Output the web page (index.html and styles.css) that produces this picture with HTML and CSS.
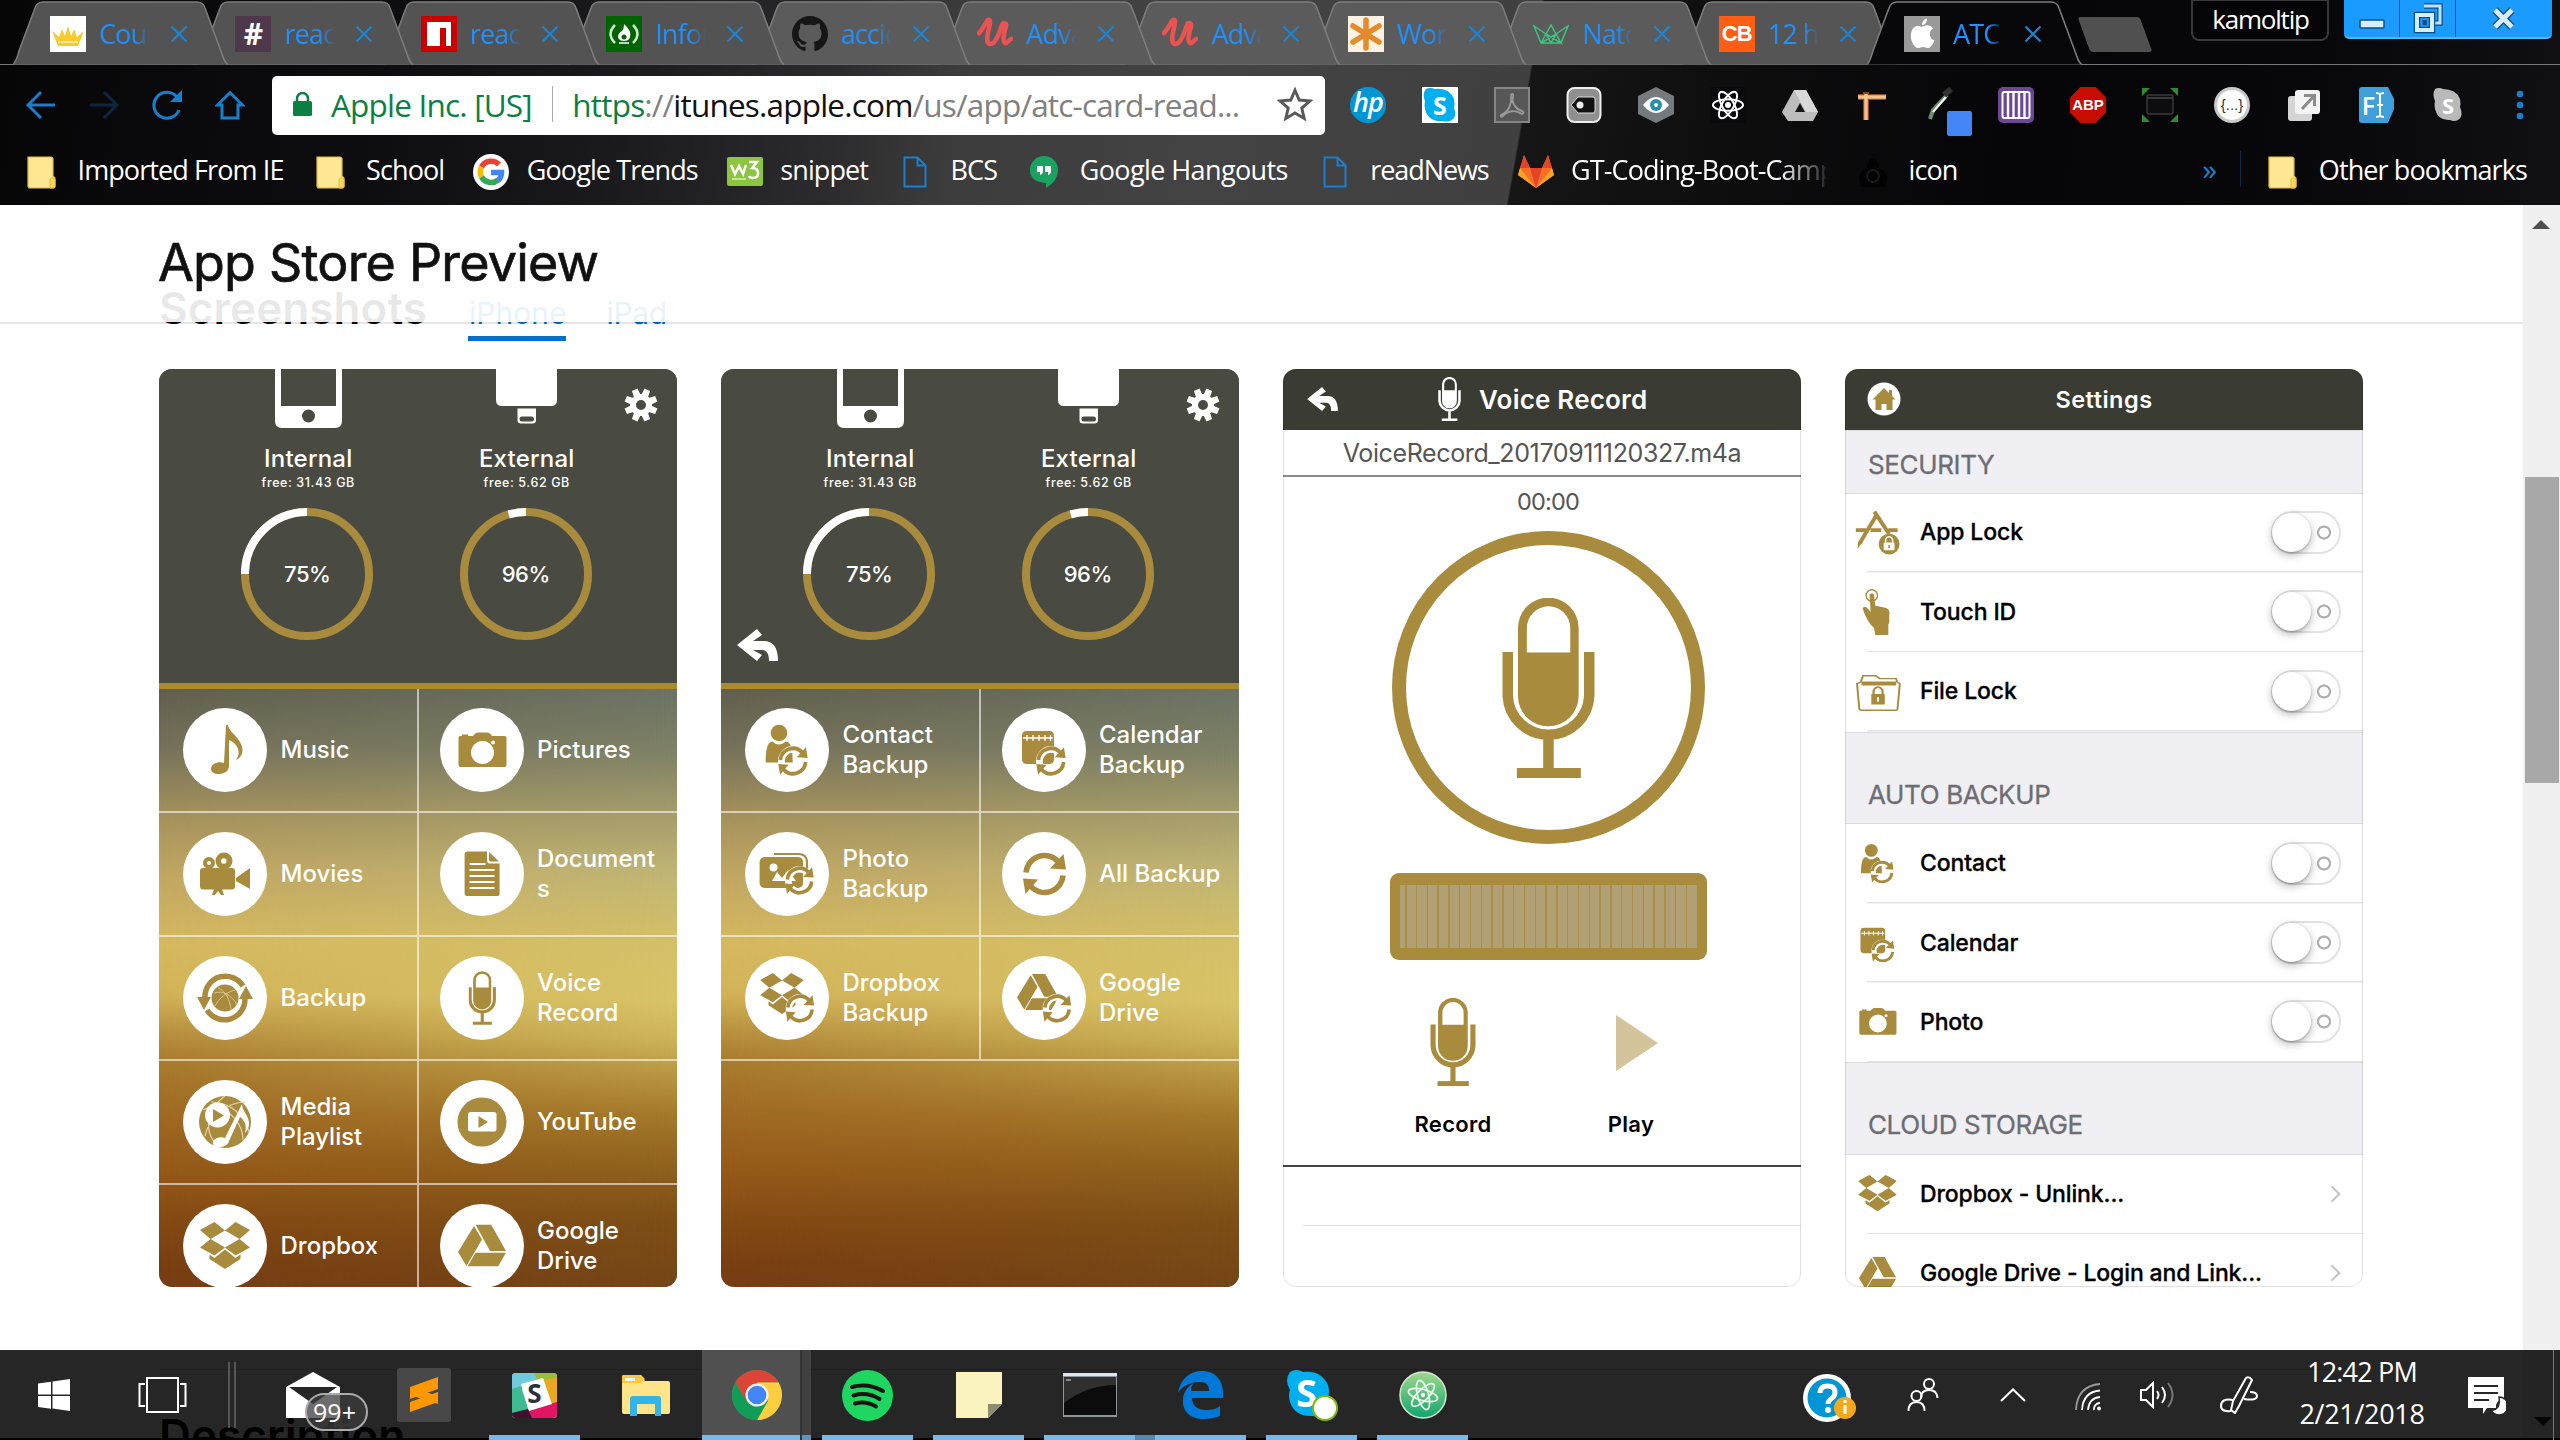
FILE: index.html
```
<!DOCTYPE html>
<html lang="en">
<head>
<meta charset="utf-8">
<title>ATC Card Reader</title>
<link rel="stylesheet" href="styles.css">
</head>
<body>
<svg class="defs" aria-hidden="true">
  <symbol id="tab-shape" viewBox="0 0 215 65"><path class="tab-fill" d="M0 64.5C3 62 4 58 6 51L22 8Q24 2 30 2H184Q190 2 192 8L209 54C211 60 212 63 215 64.5"/></symbol>
  <symbol id="x" viewBox="0 0 18 18"><path d="M1.5 1.500l15 15M16.500 1.500l-15 15" stroke="#1f83cf" stroke-width="2.200" fill="none"/></symbol>
  <symbol id="folder" viewBox="0 0 36 36"><path d="M4 3h23q2 0 2 2v17l2 2v8q0 2-2 2H6q-2 0-2-2z" fill="#ffe793" stroke="#e3b93c" stroke-width="1.200"/><path d="M26 34v-8q0-2 2-2h1q2 0 2 2v6q0 2-2 2z" fill="#ffd95a" stroke="#e3b93c"/></symbol>
  <symbol id="doc" viewBox="0 0 36 36"><path d="M7.500 3.500h13l8 8v21h-21zM20.500 3.500v8h8" fill="none" stroke="#1b7fd0" stroke-width="2"/></symbol>
  <symbol id="udemy" viewBox="0 0 36 36"><path d="M2 17C6 13 9 6 11 4c3-1 2 3 1 8-2 8-3 15 1 16 5 1 9-10 12-19 1-3 5-2 4 1-2 7-4 16-1 17 2 1 4-3 6-4" fill="none" stroke="#eb5252" stroke-width="4.600" stroke-linecap="round"/></symbol>
  <symbol id="drive-grey" viewBox="0 0 36 36"><path d="M12 3h12L36 25l-5 9H6L0 25z" fill="#bdbdbd"/><path d="M12 3h12l12 22H24z" fill="#d8d8d8"/><path d="M18 16l5 9H13z" fill="#151515"/></symbol>

  <symbol id="mic" viewBox="0 0 92.500 180"><path fill="currentColor" fill-rule="evenodd" d="M15.700 30a30.300 30.300 0 0 1 60.700 0v68a30.300 30.300 0 0 1-60.700 0zM24.600 54.600H68V30a21.700 21.700 0 0 0-43.400 0z"/><path fill="none" stroke="currentColor" stroke-width="10.500" d="M5.500 54v44a40.800 40.800 0 0 0 81.500 0V54M46.200 140v32"/><path fill="currentColor" d="M14.600 170h64v10h-64z"/></symbol>
  <symbol id="reply" viewBox="0 0 41 32"><path fill="currentColor" d="M0 16L20 0l5 6-9 6h11c9 0 14 6 14 20h-9c0-7-2-11-7-11h-9l9 5-5 6z"/></symbol>
  <symbol id="gear" viewBox="-17 -17 34 34"><g fill="currentColor"><path fill-rule="evenodd" d="M-11 0a11 11 0 1 0 22 0a11 11 0 1 0-22 0M-5 0a5 5 0 1 0 10 0a5 5 0 1 0-10 0"/><path d="M-3.500-9L-3-16.500H3L3.500-9zM-3.500 9L-3 16.500H3L3.500 9zM-9-3.500L-16.500-3V3L-9 3.500zM9-3.500L16.500-3V3L9 3.500z" transform="rotate(22.500)"/><path d="M-3.500-9L-3-16.500H3L3.500-9zM-3.500 9L-3 16.500H3L3.500 9zM-9-3.500L-16.500-3V3L-9 3.500zM9-3.500L16.500-3V3L9 3.500z" transform="rotate(67.500)"/></g></symbol>
  <symbol id="phone" viewBox="0 0 67 59"><path fill="#fff" fill-rule="evenodd" d="M0 0h67v52q0 7-7 7H7q-7 0-7-7zM6 0v37h55V0zM27 47a6.500 6.500 0 1 0 13 0a6.500 6.500 0 1 0-13 0"/></symbol>
  <symbol id="stick" viewBox="0 0 67 59"><path fill="#fff" fill-rule="evenodd" d="M3 0h61v31q0 6-6 6H9q-6 0-6-6zM24.500 39.500h18.500V51q0 3.500-3.500 3.500H28q-3.500 0-3.500-3.500zM29 47.500a2.500 2.500 0 0 0 0 5h9.500a2.500 2.500 0 0 0 0-5z"/></symbol>
  <symbol id="sync" viewBox="0 0 44 44"><path fill="none" stroke="currentColor" stroke-width="5.500" d="M3.500 20.500A18.500 18.500 0 0 1 36 10M40.500 23.500A18.500 18.500 0 0 1 8 34"/><path fill="currentColor" d="M41 2l2.500 15.500-16-1zM3 42L.5 26.500l15 1z"/></symbol>
  <symbol id="sync-badge" viewBox="0 0 44 44"><circle cx="22" cy="22" r="17" fill="none" stroke="#fff" stroke-width="10"/><use href="#sync"/></symbol>
  <symbol id="dropbox-shape" viewBox="0 0 50 47"><path fill="currentColor" d="M0 8L14.500 0 25 8.500 10.500 17zM50 8L35.500 0 25 8.500 39.500 17zM0 25.500L10.500 17 25 25.500 14.500 33.500zM50 25.500L39.500 17 25 25.500 35.500 33.500zM9.500 32.500L14.500 36 25 27.500 35.500 36l5-3.500v4.500L25 47 9.500 37z"/></symbol>
  <symbol id="drive-shape" viewBox="0 0 48 42"><path fill="currentColor" d="M17.500 0H33l15 26.500H32zM16 1.500L24 15 8.500 41.500 0 27.500zM17.500 28.200H48L40 42H9.500z"/></symbol>

  <symbol id="music" viewBox="0 0 84 84"><path fill="currentColor" d="M43 17h2c1 8 14 13 14.500 25 0 4-2 8-6.500 10 6-8 1-17-7-20v26c0 5-5 8-10 8s-8-2-8-5c0-5 7-8 13-6z"/></symbol>
  <symbol id="camera" viewBox="0 0 84 84"><path fill="currentColor" fill-rule="evenodd" d="M20 28h2v-1.500h6V28h5q2-3.500 5-3.500h9q3 0 5 3.500h12.500q2 0 2 2v27q0 2-2 2H20.500q-2 0-2-2V30q0-2 1.500-2zM31 44.600a11.500 11.500 0 1 0 23 0a11.500 11.500 0 1 0-23 0M51 34.500a2 2 0 1 0 4 0a2 2 0 1 0-4 0"/></symbol>
  <symbol id="movie" viewBox="0 0 84 84"><g fill="currentColor"><path fill-rule="evenodd" d="M20 31a6 6 0 1 0 12 0a6 6 0 1 0-12 0M24 31a2 2 0 1 0 4 0a2 2 0 1 0-4 0M32.500 29a8.500 8.500 0 1 0 17 0a8.500 8.500 0 1 0-17 0M38 29a2.800 2.800 0 1 0 5.600 0a2.800 2.800 0 1 0-5.600 0"/><rect x="17" y="36" width="35" height="21.500" rx="3"/><path d="M53 46l14-10v21L53 49zM31 57h8l2 6h-3l-3-4-3 4h-3z"/></g></symbol>
  <symbol id="file" viewBox="0 0 84 84"><path fill="currentColor" d="M27 19.500h20v9q0 3 3 3h9.600V62q0 2-2 2H27q-2.400 0-2.400-2V22q0-2.500 2.400-2.500zM49 20l10 9.500h-8q-2 0-2-2z"/><path stroke="#fff" stroke-width="1.800" d="M29.500 32h16M29.500 38h25M29.500 44h25M29.500 50h25M29.500 56h25"/></symbol>
  <symbol id="backup" viewBox="0 0 84 84"><circle cx="42" cy="42" r="13.500" fill="currentColor"/><path d="M31 37c8-3 18 2 23 12M35 32c8 3 12 12 13 22M52 34c-8 2-16 8-20 16" stroke="#d9c48f" fill="none"/><path fill="none" stroke="currentColor" stroke-width="5.500" d="M22 41A20.500 20.500 0 0 1 60 30M62 43A20.500 20.500 0 0 1 24 54"/><path fill="currentColor" d="M14 41h14l-7 13zM70 43H56l7-13z"/></symbol>
  <symbol id="voice" viewBox="0 0 84 84"><use href="#mic" x="28.500" y="15" width="27.500" height="54"/></symbol>
  <symbol id="playlist" viewBox="0 0 84 84"><circle cx="42" cy="42" r="26" fill="currentColor"/><path d="M20 30c16-10 40 8 40 30M22 56c4-18 22-34 40-34M42 16c-20 14-22 40-4 52M28 22c20 0 34 14 38 30" stroke="#e2d3a8" fill="none" stroke-width="1.200"/><circle cx="34.500" cy="35" r="12.500" fill="#fff"/><path d="M30 29v13l11-6.500z" fill="currentColor"/><path d="M59 24c0 7 7 12 7 19 0 5-2 8-4 10 2-7 0-13-5-16L46 61c-1 4-5 6-10 6-4 0-7-2-6-5 1-4 8-6 12-4z" fill="#fff"/></symbol>
  <symbol id="youtube" viewBox="0 0 84 84"><circle cx="42" cy="42" r="24.500" fill="currentColor"/><rect x="28" y="32" width="28.500" height="19.500" rx="2.500" fill="#fff"/><path d="M38.500 36v12l9.500-6z" fill="currentColor"/></symbol>
  <symbol id="dropbox" viewBox="0 0 84 84"><use href="#dropbox-shape" x="17" y="18" width="50" height="47"/></symbol>
  <symbol id="gdrive" viewBox="0 0 84 84"><use href="#drive-shape" x="18" y="20.500" width="48" height="42"/></symbol>
  <symbol id="contact" viewBox="0 0 84 84"><circle cx="34" cy="25" r="8.300" fill="currentColor"/><path fill="currentColor" d="M20.700 54.500c0-11 1-21 7-21 3 4 9 4 13 0 6 0 7 10 7 21z"/><use href="#sync-badge" x="33" y="38" width="30" height="30"/></symbol>
  <symbol id="calendar" viewBox="0 0 84 84"><rect x="20" y="23" width="32" height="33" rx="4.500" fill="currentColor"/><path d="M21 30h30M25 27v6M31 27v6M37 27v6M43 27v6M48.500 27v6" stroke="#fff" stroke-width="1.300"/><use href="#sync-badge" x="34" y="38" width="30" height="30"/></symbol>
  <symbol id="photo" viewBox="0 0 84 84"><path d="M29 22h24q9 0 9 8v8" fill="none" stroke="currentColor" stroke-width="2.200"/><rect x="14.600" y="25" width="43.500" height="31" rx="5" fill="currentColor"/><circle cx="28.500" cy="35.500" r="4" fill="#fff"/><path d="M27 49l5-9 5 6 6-8 8 11z" fill="#fff"/><use href="#sync-badge" x="40" y="34" width="29" height="29"/></symbol>
  <symbol id="allsync" viewBox="0 0 84 84"><use href="#sync" x="20.500" y="20" width="44" height="44"/></symbol>
  <symbol id="dropbox-sync" viewBox="0 0 84 84"><use href="#dropbox-shape" x="15" y="17" width="44" height="41"/><use href="#sync-badge" x="40.500" y="38" width="29" height="29"/></symbol>
  <symbol id="gdrive-sync" viewBox="0 0 84 84"><use href="#drive-shape" x="15" y="18" width="41" height="36"/><use href="#sync-badge" x="40.500" y="38" width="29" height="29"/></symbol>
  <symbol id="applock" viewBox="0 0 84 84"><g fill="none" stroke="currentColor" stroke-width="5"><path d="M14 39h13M33 39h14M56 39h12M19 56L41 19M38 15l19 29"/></g><path fill="currentColor" d="M16 63l1-9 5 2z"/><circle cx="57" cy="57" r="13.500" fill="currentColor"/><rect x="50" y="55" width="14" height="10" rx="1.500" fill="#fff"/><path d="M52.500 55v-3a4.500 4.500 0 0 1 9 0v3" fill="none" stroke="#fff" stroke-width="2"/><path d="M57 58v4" stroke="currentColor" stroke-width="2"/></symbol>
  <symbol id="touch" viewBox="-11 -14 114 114"><circle cx="36" cy="15" r="10" fill="none" stroke="currentColor" stroke-width="2.500"/><path fill="currentColor" d="M32 14q4-6 8 0l2 19 16 3q9 2 9 9-1 10 0 16l-2 5v18H42L40 72Q28 62 20 38q2-6 8-1l6 7z"/></symbol>
  <symbol id="filelock" viewBox="0 0 84 84"><g transform="translate(1 11.500) scale(.97 .73)"><path fill="none" stroke="currentColor" stroke-width="2.600" d="M18 72L15 28l5-3 3-11h17l5 5h22l2 7 3 2-3 44q0 3-3 3H21q-3 0-3-3z"/><path fill="currentColor" d="M21 24h46v7H21zM34 46h18v19H34z"/><path d="M37 46v-4a6 8 0 0 1 12 0v4" fill="none" stroke="currentColor" stroke-width="3"/><path d="M43 52v8" stroke="#fff" stroke-width="2.500"/></g></symbol>
</svg>

<header class="browser">
  <div class="tabstrip">
    <div class="tab"><svg class="shape"><use href="#tab-shape"/></svg><span class="fav bg-white"><svg viewBox="0 0 36 36"><path d="M2 15l7 6 3-8 3 7 3-10 3 10 3-7 3 8 7-6-6 15H8z" fill="#f5cc2c"/><path d="M8 26h20" stroke="#fff"/></svg></span><span class="title">Cour</span><svg class="close"><use href="#x"/></svg></div>
    <div class="tab"><svg class="shape"><use href="#tab-shape"/></svg><span class="fav bg-slack">#</span><span class="title">reac</span><svg class="close"><use href="#x"/></svg></div>
    <div class="tab"><svg class="shape"><use href="#tab-shape"/></svg><span class="fav bg-npm"><svg viewBox="0 0 36 36"><path d="M6 6h24v24h-5V12h-6v18H6z" fill="#fff"/></svg></span><span class="title">reac</span><svg class="close"><use href="#x"/></svg></div>
    <div class="tab"><svg class="shape"><use href="#tab-shape"/></svg><span class="fav bg-fcc"><svg viewBox="0 0 36 36"><path d="M9 9q-9 9 0 18M27 9q9 9 0 18" fill="none" stroke="#cfe8cf" stroke-width="2.500"/><path d="M18 8q8 7 6 13-1 4-6 4t-6-4q0-4 4-6 2-2 2-7z" fill="#fff"/><path d="M13 27h10" stroke="#fff" stroke-width="1.500"/><circle cx="18" cy="21" r="2.500" fill="#006400"/></svg></span><span class="title">Infor</span><svg class="close"><use href="#x"/></svg></div>
    <div class="tab"><svg class="shape"><use href="#tab-shape"/></svg><span class="fav"><svg viewBox="0 0 16 16"><path fill="#161616" d="M8 0C3.580 0 0 3.580 0 8c0 3.540 2.290 6.530 5.470 7.590.4.070.55-.17.55-.38 0-.19-.01-.82-.01-1.490-2.010.37-2.530-.49-2.690-.94-.09-.23-.48-.94-.82-1.130-.28-.15-.68-.52-.01-.53.63-.01 1.080.58 1.230.82.720 1.210 1.870.87 2.330.66.070-.52.280-.87.510-1.070-1.780-.2-3.640-.89-3.640-3.950 0-.87.310-1.590.82-2.150-.08-.2-.36-1.020.08-2.120 0 0 .67-.21 2.200.82.640-.18 1.320-.27 2-.27s1.360.09 2 .27c1.530-1.040 2.200-.82 2.200-.82.440 1.100.160 1.920.080 2.120.510.560.820 1.270.820 2.150 0 3.070-1.870 3.750-3.650 3.950.290.250.540.730.540 1.480 0 1.070-.01 1.930-.01 2.200 0 .210.150.460.550.380A8.010 8.010 0 0 0 16 8c0-4.420-3.580-8-8-8z"/></svg></span><span class="title">accid</span><svg class="close"><use href="#x"/></svg></div>
    <div class="tab"><svg class="shape"><use href="#tab-shape"/></svg><span class="fav"><svg><use href="#udemy"/></svg></span><span class="title">Adva</span><svg class="close"><use href="#x"/></svg></div>
    <div class="tab"><svg class="shape"><use href="#tab-shape"/></svg><span class="fav"><svg><use href="#udemy"/></svg></span><span class="title">Adva</span><svg class="close"><use href="#x"/></svg></div>
    <div class="tab"><svg class="shape"><use href="#tab-shape"/></svg><span class="fav bg-cream"><svg viewBox="0 0 36 36"><path d="M18 4v28M5 10l26 16M31 10L5 26" stroke="#e48a2a" stroke-width="5.500" stroke-linecap="round"/></svg></span><span class="title">Wor</span><svg class="close"><use href="#x"/></svg></div>
    <div class="tab"><svg class="shape"><use href="#tab-shape"/></svg><span class="fav"><svg viewBox="0 0 36 36"><path d="M8 27L1 10l12 8 5-9 5 9 12-8-7 17zM8 27l5-9 15 9 -5-9L8 27M13 18l5 9 5-9" fill="none" stroke="#3fc380" stroke-width="1.500"/></svg></span><span class="title">Nato</span><svg class="close"><use href="#x"/></svg></div>
    <div class="tab"><svg class="shape"><use href="#tab-shape"/></svg><span class="fav bg-cb">CB</span><span class="title">12 h</span><svg class="close"><use href="#x"/></svg></div>
    <div class="tab active"><svg class="shape"><use href="#tab-shape"/></svg><span class="fav bg-grey"><svg viewBox="0 0 36 36"><path d="M18 11c2-1 4-2 6-1.500 2 0 4 1 5 3-5 3-4 10 1.500 12-1 3-3 6-5.500 7.500-2 .5-4-1-6-1s-4 1.500-6 1C8 29 5 21 8 14c2-4 6-5 10-3zM18 9c0-3 2-6 5-6.500 0 4-2 6.500-5 6.500z" fill="#fff"/></svg></span><span class="title">ATC</span><svg class="close"><use href="#x"/></svg></div>
    <span class="newtab"></span>
    <span class="profile">kamoltip</span>
    <div class="winbtns">
      <span><svg width="28" height="34" viewBox="0 0 28 34"><rect x="2" y="19" width="24" height="8" rx="1" fill="#d6ecff" stroke="#0a4f8c" stroke-width="1.500"/></svg></span>
      <span><svg width="30" height="34" viewBox="0 0 30 34"><path d="M11 5h16v17h-5" fill="none" stroke="#0a4f8c" stroke-width="5.500"/><path d="M11 5h16v17h-5" fill="none" stroke="#bfe2ff" stroke-width="3"/><rect x="4" y="14" width="15" height="15" fill="none" stroke="#0a4f8c" stroke-width="6.500"/><rect x="4" y="14" width="15" height="15" fill="none" stroke="#d6ecff" stroke-width="4"/><rect x="9.500" y="19" width="4.500" height="5" fill="#0a4f8c"/></svg></span>
      <span class="wide"><svg width="28" height="34" viewBox="0 0 28 34"><path d="M5 9l17 17M22 9L5 26" stroke="#0a4f8c" stroke-width="7.500"/><path d="M5 9l17 17M22 9L5 26" stroke="#d6ecff" stroke-width="5"/></svg></span>
    </div>
  </div>

  <div class="toolbar">
    <div class="nav">
      <svg viewBox="0 0 30 30"><path d="M29 15H3M15 2L2 15l13 13" fill="none" stroke="#1680cc" stroke-width="3"/></svg>
      <svg viewBox="0 0 30 30"><path d="M1 15h26M15 2l13 13-13 13" fill="none" stroke="#0d2740" stroke-width="3"/></svg>
      <svg viewBox="0 0 30 30"><path d="M27 20A13 13 0 1 1 25 7" fill="none" stroke="#1680cc" stroke-width="3"/><path d="M30 0v12H18z" fill="#1680cc"/></svg>
      <svg viewBox="0 0 30 30"><path d="M15 2.500L2.500 15H7v13h16V15h4.500z" fill="none" stroke="#1680cc" stroke-width="3"/></svg>
    </div>
    <div class="omnibox">
      <svg class="lock" viewBox="0 0 19 25"><rect y="9" width="19" height="15" rx="1.500" fill="#0b8043"/><path d="M4 10V6.500a5.500 5.500 0 0 1 11 0V10" fill="none" stroke="#0b8043" stroke-width="2.500"/></svg>
      <span class="ev">Apple Inc. [US]</span>
      <span class="sep"></span>
      <span class="url"><span class="ok">https</span>://<b>itunes.apple.com</b>/us/app/atc-card-read...</span>
      <svg class="star" viewBox="0 0 34 34"><path d="M17 4l4 9.300 10 .9-7.600 6.600 2.300 9.800L17 25.400l-8.700 5.200 2.300-9.800L3 14.200l10-.9z" fill="none" stroke="#5a5a5a" stroke-width="2.800"/></svg>
    </div>
    <div class="exts">
      <span class="ext hp">hp</span>
      <span class="ext bg-white"><svg viewBox="0 0 36 36"><path d="M4 2q4-2 9 0 14-2 19 10 1 5 0 9 4 9-4 13-4 1-8 0Q6 35 3 22q-1-4 0-8-3-7 1-12z" fill="#00aff0"/></svg><i>S</i></span>
      <span class="ext"><svg viewBox="0 0 36 36"><rect x="1" y="1" width="34" height="34" fill="#575757" stroke="#868686" stroke-width="2"/><path d="M7 28c8-3 11-12 10-19 0-3 3-3 2 1-2 6 4 13 9 14 3 1 1 4-2 2-6-4-14-1-17 3-1 1-3 1-2-1z" fill="none" stroke="#999" stroke-width="1.800"/></svg></span>
      <span class="ext"><svg viewBox="0 0 36 36"><rect x="1.500" y="1" width="33" height="34" rx="7" fill="#8f8f8f" stroke="#eee" stroke-width="2"/><path d="M5 18l7-8h15q2 0 2 2v12q0 2-2 2H12z" fill="#111" stroke="#ddd"/><circle cx="14" cy="18" r="3.500" fill="#eee"/></svg></span>
      <span class="ext"><svg viewBox="0 0 36 36"><path d="M18 0l18 9v18l-18 9L0 27V9z" fill="#767a7c"/><path d="M5 18q13-16 26 0-13 16-26 0z" fill="#fff"/><circle cx="18" cy="18" r="6" fill="#2a8cb5"/><circle cx="18" cy="18" r="2" fill="#fff"/></svg></span>
      <span class="ext"><svg viewBox="-18 -18 36 36"><rect x="-18" y="-18" width="36" height="36" fill="#0a0a0c"/><g fill="none" stroke="#fff" stroke-width="2"><ellipse rx="15" ry="5.800"/><ellipse rx="15" ry="5.800" transform="rotate(60)"/><ellipse rx="15" ry="5.800" transform="rotate(120)"/></g><circle r="3" fill="#fff"/></svg></span>
      <span class="ext"><svg><use href="#drive-grey"/></svg></span>
      <span class="ext"><svg viewBox="0 0 36 36"><path d="M4 10h28M12 5v28" stroke="#8a4a1c" stroke-width="6"/><path d="M4 10h28M12 7v26" stroke="#f5c48c" stroke-width="3.500"/></svg></span>
      <span class="ext"><svg viewBox="0 0 36 36"><path d="M4 32l3-9L21 8" stroke="#6b8f72" stroke-width="4" fill="none"/><path d="M7 25L20 10" stroke="#fff" stroke-width="2"/><path d="M18 8L25 2" stroke="#333" stroke-width="6"/></svg><b class="swatch"></b></span>
      <span class="ext"><svg viewBox="0 0 36 36"><rect width="36" height="36" rx="5" fill="#6b4796"/><rect x="4.500" y="5" width="27" height="26" rx="2" fill="#6b4796" stroke="#fff" stroke-width="2"/><path d="M10 5v26M15.500 5v26M21 5v26M26.500 5v26" stroke="#fff" stroke-width="2.400"/></svg></span>
      <span class="ext abp">ABP</span>
      <span class="ext"><svg viewBox="0 0 36 36"><path d="M0 1h8L0 9zM36 1h-8l8 8zM0 35h8l-8-8zM36 35h-8l8-8z" fill="#2f8a2f"/><rect x="5" y="8" width="26" height="19" rx="2" fill="#0d0d0f" stroke="#3a3a3a" stroke-width="1.500"/><path d="M5 11h26" stroke="#3a3a3a" stroke-width="2"/></svg></span>
      <span class="ext json">{...}</span>
      <span class="ext"><svg viewBox="0 0 36 36"><rect x="2" y="9" width="24" height="25" rx="3" fill="#d5d5d5"/><rect x="9" y="3" width="25" height="24" rx="3" fill="#f4f4f4"/><path d="M16 22L28 9M18 8.500h10.500V19" fill="none" stroke="#8b8b8b" stroke-width="3"/></svg></span>
      <span class="ext"><svg viewBox="0 0 36 36"><path d="M4 0h26l6 12v10l-6 14H4q-3 0-3-3V3q0-3 3-3z" fill="#3f9fdb"/><path d="M18 6q3 0 4 1.500Q23 6 26 6M18 30q3 0 4-1.500Q23 30 26 30M22 7v22M19 18h6" fill="none" stroke="#fff" stroke-width="2"/></svg><i class="left">F</i></span>
      <span class="ext"><svg viewBox="0 0 36 36"><path d="M5 2q4-2 8 0 13 0 17 10 1 5 0 8 4 9-2 13-4 2-8 0Q8 34 5 22q-1-4 0-8-3-7 0-12z" fill="#b9b9b9"/></svg><i class="grey">S</i></span>
      <span class="ext"><svg viewBox="0 0 36 36"><g fill="#1680cc"><circle cx="18" cy="7" r="3.300"/><circle cx="18" cy="18" r="3.300"/><circle cx="18" cy="29" r="3.300"/></g></svg></span>
    </div>
  </div>

  <div class="bookmarks">
    <span class="bm"><svg><use href="#folder"/></svg>Imported From IE</span>
    <span class="bm"><svg><use href="#folder"/></svg>School</span>
    <span class="bm"><svg viewBox="0 0 36 36"><circle cx="18" cy="18" r="18" fill="#fff"/><g fill="none" stroke-width="5.500"><path d="M8.500 13A11 11 0 0 1 26 10.500" stroke="#ea4335"/><path d="M8.500 23a11 11 0 0 1 0-10" stroke="#fbbc05"/><path d="M8.500 23A11 11 0 0 0 25 26" stroke="#34a853"/><path d="M18 18.500h10.500q0 5-3.500 8" stroke="#4285f4"/></g></svg>Google Trends</span>
    <span class="bm"><svg viewBox="0 0 36 36"><rect y="3" width="36" height="29" rx="2" fill="#8cc53f"/><path d="M4 11l4 9 4-8 4 8 3-9M22 8h8l-5 6q6 0 6 5t-5 5q-3 0-4-2" fill="none" stroke="#fff" stroke-width="2.500"/><path d="M5 25h14" stroke="#d8efb8" stroke-width="1.500"/></svg>snippet</span>
    <span class="bm"><svg><use href="#doc"/></svg>BCS</span>
    <span class="bm wide"><svg viewBox="0 0 36 36"><path d="M18 2a14 14 0 0 1 14 14q0 11-12 18v-5Q4 28 4 16A14 14 0 0 1 18 2z" fill="#1ba261"/><path d="M11 12h6v5q0 3-3 4v-3h-3zM19 12h6v5q0 3-3 4v-3h-3z" fill="#fff"/></svg>Google Hangouts</span>
    <span class="bm tight"><svg><use href="#doc"/></svg>readNews</span>
    <span class="bm"><svg viewBox="0 0 36 36"><path d="M18 34L0 21 6 1l6 13h12L30 1l6 20z" fill="#fc6d26"/><path d="M6 1l6 13H2zM30 1l-6 13h10zM18 34l-6-20h12z" fill="#e24329"/><path d="M2 14l-2 7 18 13zM34 14l2 7-18 13z" fill="#fca326"/></svg><span class="fade">GT-Coding-Boot-Camp</span></span>
    <span class="bm"><svg viewBox="0 0 36 36"><path d="M18 4q6 2 6 10 8 4 8 11l-2 8H6l-2-8q0-7 8-11 0-8 6-10z" fill="#020202"/><circle cx="18" cy="22" r="6" fill="none" stroke="#1a1a1a" stroke-width="2"/></svg>icon</span>
    <span class="more">»</span>
    <span class="bm other"><svg><use href="#folder"/></svg>Other bookmarks</span>
  </div>
</header>

<main class="page">
  <div class="storebar"><h1>App Store Preview</h1></div>

  <section class="shelf">
    <div class="shelf-head">
      <h2>Screenshots</h2>
      <a class="device on">iPhone</a>
      <a class="device">iPad</a>
    </div>
    <div class="shots">

      <article class="shot gold">
        <div class="storage">
          <svg class="gear"><use href="#gear"/></svg>
          <div class="disk"><svg class="dev"><use href="#phone"/></svg><b>Internal</b><small>free: 31.43 GB</small>
            <div class="ring"><svg viewBox="0 0 132 132"><circle cx="66" cy="66" r="62" pathLength="100"/><circle class="free" cx="66" cy="66" r="62" pathLength="100" stroke-dasharray="25 75" transform="rotate(180 66 66)"/></svg><span>75%</span></div></div>
          <div class="disk"><svg class="dev"><use href="#stick"/></svg><b>External</b><small>free: 5.62 GB</small>
            <div class="ring"><svg viewBox="0 0 132 132"><circle cx="66" cy="66" r="62" pathLength="100"/><circle class="free" cx="66" cy="66" r="62" pathLength="100" stroke-dasharray="4.500 95.500" transform="rotate(253.800 66 66)"/></svg><span>96%</span></div></div>
        </div>
        <div class="tiles">
          <div class="tile"><svg><use href="#music"/></svg><span>Music</span></div><div class="tile"><svg><use href="#camera"/></svg><span>Pictures</span></div>
          <div class="tile"><svg><use href="#movie"/></svg><span>Movies</span></div><div class="tile"><svg><use href="#file"/></svg><span>Documents</span></div>
          <div class="tile"><svg><use href="#backup"/></svg><span>Backup</span></div><div class="tile"><svg><use href="#voice"/></svg><span>Voice Record</span></div>
          <div class="tile"><svg><use href="#playlist"/></svg><span>Media Playlist</span></div><div class="tile"><svg><use href="#youtube"/></svg><span>YouTube</span></div>
          <div class="tile"><svg><use href="#dropbox"/></svg><span>Dropbox</span></div><div class="tile"><svg><use href="#gdrive"/></svg><span>Google Drive</span></div>
        </div>
      </article>

      <article class="shot gold">
        <div class="storage">
          <svg class="gear"><use href="#gear"/></svg>
          <svg class="back"><use href="#reply"/></svg>
          <div class="disk"><svg class="dev"><use href="#phone"/></svg><b>Internal</b><small>free: 31.43 GB</small>
            <div class="ring"><svg viewBox="0 0 132 132"><circle cx="66" cy="66" r="62" pathLength="100"/><circle class="free" cx="66" cy="66" r="62" pathLength="100" stroke-dasharray="25 75" transform="rotate(180 66 66)"/></svg><span>75%</span></div></div>
          <div class="disk"><svg class="dev"><use href="#stick"/></svg><b>External</b><small>free: 5.62 GB</small>
            <div class="ring"><svg viewBox="0 0 132 132"><circle cx="66" cy="66" r="62" pathLength="100"/><circle class="free" cx="66" cy="66" r="62" pathLength="100" stroke-dasharray="4.500 95.500" transform="rotate(253.800 66 66)"/></svg><span>96%</span></div></div>
        </div>
        <div class="tiles">
          <div class="tile"><svg><use href="#contact"/></svg><span>Contact Backup</span></div><div class="tile"><svg><use href="#calendar"/></svg><span>Calendar Backup</span></div>
          <div class="tile"><svg><use href="#photo"/></svg><span>Photo Backup</span></div><div class="tile"><svg><use href="#allsync"/></svg><span>All Backup</span></div>
          <div class="tile"><svg><use href="#dropbox-sync"/></svg><span>Dropbox Backup</span></div><div class="tile"><svg><use href="#gdrive-sync"/></svg><span>Google Drive</span></div>
        </div>
      </article>

      <article class="shot light">
        <div class="appbar voicebar"><svg class="reply"><use href="#reply"/></svg><svg class="barmic"><use href="#mic"/></svg><b>Voice Record</b></div>
        <div class="filename">VoiceRecord_20170911120327.m4a</div>
        <div class="timer">00:00</div>
        <div class="bigmic"><svg><use href="#mic"/></svg></div>
        <div class="meter"><span></span></div>
        <div class="actions">
          <div class="action"><svg class="smallmic"><use href="#mic"/></svg><b>Record</b></div>
          <div class="action"><svg class="play" viewBox="0 0 42 56"><path d="M0 0l42 28L0 56z" fill="#d3c49b"/></svg><b>Play</b></div>
        </div>
        <div class="listrow"></div>
      </article>

      <article class="shot light">
        <div class="appbar"><svg class="home" viewBox="0 0 34 34"><circle cx="17" cy="17" r="16.500" fill="#fff"/><path d="M17 6L5.500 17.500H8.500V28h6v-6h5v6h6V17.500h3L25 14V8h-3v3z" fill="#a98b3d"/></svg><b>Settings</b></div>
        <h3 class="group first">SECURITY</h3>
        <div class="set"><svg><use href="#applock"/></svg><span>App Lock</span><i class="toggle"></i></div>
        <div class="set"><svg><use href="#touch"/></svg><span>Touch ID</span><i class="toggle"></i></div>
        <div class="set"><svg><use href="#filelock"/></svg><span>File Lock</span><i class="toggle"></i></div>
        <h3 class="group">AUTO BACKUP</h3>
        <div class="set"><svg><use href="#contact"/></svg><span>Contact</span><i class="toggle"></i></div>
        <div class="set"><svg><use href="#calendar"/></svg><span>Calendar</span><i class="toggle"></i></div>
        <div class="set"><svg><use href="#camera"/></svg><span>Photo</span><i class="toggle"></i></div>
        <h3 class="group">CLOUD STORAGE</h3>
        <div class="set"><svg><use href="#dropbox"/></svg><span>Dropbox - Unlink...</span><i class="chev"></i></div>
        <div class="set"><svg><use href="#gdrive"/></svg><span>Google Drive - Login and Link...</span><i class="chev"></i></div>
      </article>
    </div>
  </section>

  <section class="about"><h2>Description</h2></section>

  <div class="scrollbar"><i class="up"></i><i class="thumb"></i><i class="down"></i></div>
</main>

<footer class="taskbar">
  <div class="start">
    <svg width="32" height="32" viewBox="0 0 32 32"><path fill="#fff" d="M0 4.500L13 2.700V15.500H0zM14.500 2.500L32 0v15.500H14.500zM0 17h13v12.700L0 28zM14.500 17H32v15l-17.500-2.500z"/></svg>
    <svg width="49" height="36" viewBox="0 0 49 36"><path d="M9 1h31v34H9zM7 7H1.500v22H7M42 7h5.500v22H42" fill="none" stroke="#fff" stroke-width="2"/></svg>
    <span class="grip"></span>
  </div>
  <div class="apps">
    <div class="app"><svg width="54" height="46" viewBox="0 0 54 46"><path d="M0 15L27 0l27 15v31H0z" fill="#fff"/><path d="M3 15h48L27 32z" fill="#262626"/></svg><span class="count">99+</span></div>
    <div class="app"><svg width="54" height="54" viewBox="0 0 54 54"><rect width="54" height="54" rx="3" fill="#484848"/><path d="M13 19L41 9v12L13 31zM13 34l28-10v10L13 44z" fill="#ff9800"/><path d="M13 19l28 9v8l-28-9z" fill="#ff9800"/></svg></div>
    <div class="app run"><svg width="45" height="45" viewBox="0 0 45 45"><defs><clipPath id="sl"><rect width="45" height="45" rx="4"/></clipPath></defs><g clip-path="url(#sl)"><rect width="45" height="45" fill="#fff"/><path d="M0 0h28l4 12-32 6z" fill="#6ecadc"/><path d="M24 0h21v36h-6z" fill="#e9a820"/><path d="M22 0h23v4L26 9z" fill="#9bbb3a"/><path d="M0 16l9-3 10 32H0z" fill="#3eb991"/><path d="M0 41l45-12v16H0z" fill="#e01563"/><path d="M0 40l16-4 4 9H0z" fill="#3b1230"/><path d="M9 11l22-6 9 26-23 7z" fill="#fff"/></g></svg><i class="s">S</i></div>
    <div class="app"><svg width="48" height="42" viewBox="0 0 48 42"><path d="M0 3q0-2 2-2h17l4 6h23q2 0 2 2v29q0 2-2 2H2q-2 0-2-2z" fill="#ffe48a"/><path d="M0 3q0-2 2-2h17l4 4-4 4H0z" fill="#ffc83d"/><path d="M3 4h10v3H3z" fill="#e9f7ff"/><path d="M8 42V25q0-3 3-3h25q3 0 3 3v17h-6V30H15v12z" fill="#33b5e8"/></svg></div>
    <div class="app run current"><svg width="50" height="50" viewBox="-25 -25 50 50"><circle r="25" fill="#4caf50"/><path d="M-21.600-12.500A25 25 0 0 1 21.600-12.500H0L-11 6z" fill="#db4437"/><path d="M21.600-12.500A25 25 0 0 1 0 25L11 5 0-12.500z" fill="#ffcd40"/><path d="M-21.600-12.500A25 25 0 0 0 0 25L11 6H-11z" fill="#0f9d58"/><circle r="11.500" fill="#f1f1f1"/><circle r="9.300" fill="#4285f4"/></svg></div>
    <div class="app run"><svg width="51" height="51" viewBox="0 0 51 51"><circle cx="25.500" cy="25.500" r="25.500" fill="#1ed760"/><path d="M10 17q16-4.500 31 4M11.500 25.500q14-4 26 3.500M13 33.500q11-3 21 3" fill="none" stroke="#191414" stroke-width="4" stroke-linecap="round"/></svg></div>
    <div class="app run"><svg width="46" height="46" viewBox="0 0 46 46"><path d="M0 0h46v32L32 46H0z" fill="#faf3bd"/><path d="M46 32H32v14z" fill="#8d8b70"/></svg></div>
    <div class="app run multi"><svg width="54" height="44" viewBox="0 0 54 44"><rect width="54" height="44" fill="#8f959b"/><rect width="54" height="3" fill="#dfe6ee"/><rect x="1" y="4" width="52" height="38" fill="#0c0c0c"/><path d="M1 4h52v8Q24 12 1 30z" fill="#303030"/><path d="M3 7h5" stroke="#ddd"/></svg></div>
    <div class="app run"><svg width="46" height="48" viewBox="0 0 46 48"><path d="M0 22C2 8 12 0 24 0c13 0 21 9 21 22v5H14c0 8 6 12 14 12 6 0 10-1 14-4v10c-5 2-10 3-16 3C12 48 4 40 5 29c0-8 5-14 11-17-3 3-3 6-3 8h18c0-6-3-9-9-9C12 11 4 15 0 22z" fill="#0078d7"/></svg></div>
    <div class="app run"><svg width="52" height="52" viewBox="0 0 52 52"><path d="M4 3q6-4 13 0 18-2 25 13 2 7 0 12 4 8 0 16-7 6-15 3Q9 48 4 33q-2-7 0-12-6-10 0-18z" fill="#00aff0"/></svg><i class="sk">S</i><i class="status"></i></div>
    <div class="app run"><svg width="48" height="48" viewBox="-24 -24 48 48"><defs><linearGradient id="at" x2="0" y2="1"><stop stop-color="#9fd98a"/><stop offset="1" stop-color="#10a56f"/></linearGradient></defs><circle r="23" fill="url(#at)" stroke="#cfe9cf" stroke-width="1.500"/><g fill="none" stroke="#e8f7e8" stroke-width="1.800"><ellipse rx="15" ry="5.500" transform="rotate(15)"/><ellipse rx="15" ry="5.500" transform="rotate(75)"/><ellipse rx="15" ry="5.500" transform="rotate(135)"/></g><circle r="2.200" fill="#fff"/></svg></div>
  </div>
  <div class="tray">
    <svg class="t-help" viewBox="0 0 53 49"><circle cx="24" cy="24" r="24" fill="#fff"/><circle cx="24" cy="24" r="19.500" fill="#0096d6"/><path d="M17 19q0-7 7.500-7t7.500 6.500q0 4-4 6.500-3 2-3 5" fill="none" stroke="#fff" stroke-width="5"/><circle cx="25" cy="36" r="3" fill="#fff"/><circle cx="42" cy="34" r="11" fill="#f5a81c"/><path d="M42 31v9" stroke="#fff" stroke-width="3"/><circle cx="42" cy="27.500" r="1.800" fill="#fff"/></svg>
    <svg class="t-people" viewBox="0 0 32 34"><g fill="none" stroke="#fff" stroke-width="2"><circle cx="22" cy="6" r="5"/><circle cx="9.500" cy="18" r="5"/><path d="M14 20q0-8 8-8t8.500 8M1.500 33q0-9 8-9t8 9"/></g></svg>
    <svg class="t-up" viewBox="0 0 26 14"><path d="M1 13L13 1.500 25 13" fill="none" stroke="#fff" stroke-width="2"/></svg>
    <svg class="t-wifi" viewBox="0 0 28 28"><g fill="none" stroke="#fff" stroke-width="1.800"><path d="M20 27a6 6 0 0 1 6-7M14 27q1-12 12-13M8 27Q9 9 26 7.500"/><path d="M2 27Q3 3 26 1" stroke="#999"/></g><circle cx="25" cy="25.500" r="2" fill="#fff"/></svg>
    <svg class="t-vol" viewBox="0 0 36 28"><g fill="none" stroke="#fff" stroke-width="2"><path d="M1 9h5l7-7v24l-7-7H1zM17 10q3 4 0 8M22 6q6 8 0 16"/><path d="M28 2q9 12 0 24" stroke="#777"/></g></svg>
    <svg class="t-pen" viewBox="0 0 40 38"><g fill="none" stroke="#fff" stroke-width="2"><path d="M16 37l-4-3 2-9L27 2q3-2 6 2L20 30zM14 24Q2 22 2 30q0 6 10 5M25 23q13 2 13-3 0-4-7-4"/></g></svg>
    <div class="clock"><span>12:42 PM</span><span>2/21/2018</span></div>
    <svg class="t-note" viewBox="0 0 38 38"><path d="M0 0h36v21q-9 3-8 10h-9l-4 6v-6H0z" fill="#fff"/><path d="M6 9h24M6 16h24M6 23h15" stroke="#262626" stroke-width="2.200"/><path d="M31 20a9 9 0 1 1-8 13q10 0 8-13z" fill="#fff" stroke="#262626" stroke-width="1.500"/></svg>
    <span class="peek"></span>
  </div>
</footer>
</body>
</html>
```
FILE: styles.css
```
* { box-sizing: border-box; }
body {
  margin: 0;
  width: 2560px;
  height: 1440px;
  overflow: hidden;
  display: grid;
  grid-template-rows: 205px 1fr;
  background: #000;
  position: relative;
  font-family: Inter, "Liberation Sans", sans-serif;
}
.defs { position: absolute; width: 0; height: 0; }
h1, h2, h3 { margin: 0; }
i { font-style: normal; }

/* Browser chrome */
.browser {
  display: grid;
  grid-template-rows: 65px 80px 60px;
  font-family: "Open Sans", "Noto Sans", sans-serif;
  font-size: 27px;
  letter-spacing: -0.9px;
  color: #fff;
  background:
    linear-gradient(100deg, transparent 0 1519px, #161616 1521px, #0d0d0e 1740px, #060608 2000px, #08080a 2300px, #101012 2540px),
    linear-gradient(97deg, #060607 0, #0d0c0f 380px, #1a191c 620px, #2b2b2d 840px, #3c3c3c 960px, #434343 1200px, #404040 1540px);
}
.tabstrip {
  position: relative;
  display: flex;
  padding-left: 13px;
  border-bottom: 1px solid #77777a;
}
.tab {
  position: relative;
  flex: none;
  width: 215px;
  height: 65px;
  margin-right: -29.6px;
  padding: 3px 0 0 37px;
  display: flex;
  align-items: center;
}
.tab:nth-child(1) { z-index: 10; }
.tab:nth-child(2) { z-index: 9; }
.tab:nth-child(3) { z-index: 8; }
.tab:nth-child(4) { z-index: 7; }
.tab:nth-child(5) { z-index: 6; }
.tab:nth-child(6) { z-index: 5; }
.tab:nth-child(7) { z-index: 4; }
.tab:nth-child(8) { z-index: 3; }
.tab:nth-child(9) { z-index: 2; }
.tab:nth-child(10) { z-index: 1; }
.tab.active { z-index: 12; }
.shape { position: absolute; inset: 0; width: 215px; height: 65px; z-index: -1; fill: #535354; }
.tab-fill { fill: inherit; stroke: #7d7d7d; stroke-width: 1.5; }
.tab:nth-child(n+5) .shape { fill: #5b5b5b; }
.tab:nth-child(10) .shape { fill: #555; }
.tab.active .shape { fill: #08080a; }
.fav {
  width: 36px;
  height: 36px;
  flex: none;
  display: grid;
  place-items: center;
  font-weight: 700;
  letter-spacing: 0;
  line-height: 36px;
}
.fav svg { width: 36px; height: 36px; }
.bg-white { background: #fff; }
.bg-slack { background: #4d394b; font-size: 30px; }
.bg-npm { background: #c00; }
.bg-fcc { background: #006400; }
.bg-cream { background: #fdf1e4; }
.bg-cb { background: #ff5e14; font-size: 22px; letter-spacing: -1px; font-family: "Liberation Sans", sans-serif; }
.bg-grey { background: #999; }
.title {
  width: 51px;
  margin: -2px 0 0 13px;
  overflow: hidden;
  white-space: nowrap;
  color: #1e90ff;
  -webkit-mask-image: linear-gradient(90deg, #000 68%, transparent 100%);
  mask-image: linear-gradient(90deg, #000 68%, transparent 100%);
}
.close { width: 18px; height: 18px; margin-left: 20px; }
.newtab {
  width: 62px;
  height: 35px;
  margin: 17px 0 0 32px;
  background: #505050;
  border-radius: 3px;
  transform: skewX(20deg);
}
.profile {
  margin-left: 45px;
  width: 138px;
  height: 41px;
  border: 2px solid #38383a;
  border-top-width: 1px;
  border-radius: 0 0 8px 8px;
  background: #050507;
  text-align: center;
  line-height: 36px;
  font-size: 26px;
  letter-spacing: -1.2px;
}
.winbtns {
  display: flex;
  margin-left: 15px;
  width: 208px;
  height: 39px;
  background: #1a9bff;
  border-radius: 0 0 5px 5px;
  border-bottom: 2px solid #53b6ff;
}
.winbtns span { width: 56px; display: grid; place-items: center; border-right: 1.5px solid #0b4f88; }
.winbtns .wide { flex: 1; border-right: 0; }
.winbtns svg { margin-top: -2px; }

.toolbar { display: flex; align-items: center; padding: 0 0 0 26px; }
.nav { display: flex; gap: 33px; width: 246px; }
.nav svg { width: 30px; height: 30px; }
.omnibox {
  width: 1053px;
  height: 59px;
  padding: 0 24px 2px 21px;
  display: flex;
  align-items: center;
  background: #fff;
  border-radius: 5px;
  font-size: 31.5px;
  letter-spacing: -0.8px;
  white-space: nowrap;
}
.lock { width: 19px; height: 25px; margin-right: 19px; }
.ev { color: #0b8043; }
.sep { width: 1.5px; height: 36px; background: #aaa; margin: 0 19px 0 20px; }
.url { color: #808080; flex: 1; }
.url .ok { color: #0b8043; }
.url b { font-weight: 400; color: #111; }
.star { width: 36px; height: 36px; margin-right: -12px; }
.exts { display: flex; gap: 36px; margin-left: 25px; }
.ext { position: relative; width: 36px; height: 36px; flex: none; display: grid; place-items: center; letter-spacing: 0; line-height: 36px; }
.ext svg { width: 36px; height: 36px; grid-area: 1 / 1; }
.ext i { grid-area: 1 / 1; font-weight: 700; font-size: 25px; z-index: 1; }
.ext .left { font-weight: 600; margin-right: 15px; }
.ext .grey { font-size: 22px; }
.hp { background: #0096d6; border-radius: 50%; font: italic 600 27px/30px "Open Sans", sans-serif; letter-spacing: -1px; align-content: start; }
.abp { background: #c70d00; clip-path: polygon(29% 0, 71% 0, 100% 29%, 100% 71%, 71% 100%, 29% 100%, 0 71%, 0 29%); font: 700 15px/36px "Liberation Sans", sans-serif; }
.json { background: #fff; border: 3px solid #c9c9c9; border-radius: 50%; color: #333; font: 400 15px/28px "Liberation Sans", sans-serif; }
.swatch { position: absolute; left: 21px; top: 24px; width: 25px; height: 25px; border-radius: 2px; background: #4285f4; }

.bookmarks { display: flex; align-items: center; padding: 0 33px 12px 24px; gap: 29px; white-space: nowrap; }
.bm { display: flex; align-items: center; gap: 17.5px; }
.bm svg { width: 36px; height: 36px; position: relative; top: 3px; }
.bm.wide { letter-spacing: -.6px; }
.bm.tight { letter-spacing: -1.1px; }
.fade { width: 255px; overflow: hidden; -webkit-mask-image: linear-gradient(90deg, #000 82%, transparent 102%); mask-image: linear-gradient(90deg, #000 82%, transparent 102%); }
.more { margin-left: auto; color: #1680cc; font-size: 30px; line-height: 36px; padding-right: 24px; border-right: 1.5px solid #0d2740; margin-right: -5px; }

/* Page */
.page { position: relative; overflow: hidden; background: #fff; height: 1233px; }
.storebar {
  position: absolute;
  z-index: 3;
  top: 0;
  left: 0;
  width: 2523px;
  height: 119px;
  padding: 25px 0 0 158px;
  background: rgba(255, 255, 255, .91);
  background-clip: padding-box;
  border-bottom: 2px solid rgba(0, 0, 0, .1);
}
.storebar h1 { font-size: 52px; font-weight: 400; line-height: 66px; letter-spacing: -.8px; color: #111; -webkit-text-stroke: .7px #111; }
.shelf { margin: 32px 0 0 159px; width: 2204px; border-top: 1px solid #d6d6d6; }
.shelf-head { display: flex; align-items: baseline; height: 131px; padding-top: 44px; }
h2 { font-size: 44px; font-weight: 600; line-height: 53px; letter-spacing: .1px; }
.device { font-size: 30px; line-height: 45px; color: #0070c9; letter-spacing: 0; margin-left: 41px; }
.device.on { border-bottom: 5px solid #0070c9; padding-left: 1px; }
.device + .device { margin-left: 40px; letter-spacing: -.3px; }
.shots { display: grid; grid-template-columns: repeat(4, 518px); gap: 44px; }
.shot { position: relative; height: 918px; border-radius: 13px; overflow: hidden; }
.about { margin: 82px 0 0 159px; width: 2204px; border-top: 1px solid #d6d6d6; padding-top: 39px; }

/* Gold file manager screens */
.gold {
  color: #fff;
  background: linear-gradient(180deg, #605f4d 319px, #77725a 381px, #a18f5b 441px, #bfa562 501px, #d6b95f 575px, #d2b257 625px, #b48b3b 670px, #a87c2e 692px, #9f6822 750px, #96591a 800px, #854a13 850px, #7a4012 890px, #773d15 918px);
}
.gold::before {
  content: "";
  position: absolute;
  inset: 0;
  background: linear-gradient(180deg, #6b7263 319px, #7e8166 381px, #a29b6a 441px, #bfb475 501px, #d2bf69 566px, #d8c366 631px, #cdb458 670px, #bb9a46 700px, #a47a2b 745px, #91651f 790px, #7d4f17 850px, #744516 918px);
  -webkit-mask-image: linear-gradient(90deg, transparent, #000);
  mask-image: linear-gradient(90deg, transparent, #000);
}
.storage {
  position: relative;
  height: 320px;
  padding-left: 40px;
  display: flex;
  background: #494b42;
  border-bottom: 6px solid #ab8b2d;
}
.gear { position: absolute; left: 465px; top: 19px; width: 34px; height: 34px; }
.back { position: absolute; left: 16px; top: 260px; width: 41px; height: 32px; }
.disk { width: 218.5px; display: flex; flex-direction: column; align-items: center; }
.dev { width: 67px; height: 59px; }
.disk b { font-size: 24px; font-weight: 500; line-height: 28px; margin-top: 17px; letter-spacing: .2px; }
.disk small { font-size: 12.5px; font-weight: 500; line-height: 16px; margin-top: 2px; letter-spacing: .6px; }
.ring { position: relative; left: -1px; width: 132px; height: 132px; margin-top: 17px; display: grid; place-items: center; font-size: 22px; font-weight: 500; letter-spacing: -.5px; }
.ring svg { position: absolute; inset: 0; fill: none; stroke: #a98b3d; stroke-width: 8; }
.ring .free { stroke: #fff; }
.tiles { position: relative; display: grid; grid-template-columns: 260px 258px; grid-auto-rows: 124px; margin-top: -.5px; }
.tile {
  display: flex;
  align-items: center;
  gap: 13.5px;
  padding: 0 0 0 24px;
  border-bottom: 2.5px solid rgba(255, 255, 255, .58);
  font-size: 24px;
  font-weight: 500;
  line-height: 29.3px;
}
.tile:nth-child(odd) { border-right: 2.5px solid rgba(255, 255, 255, .58); }
.tile:nth-child(even) { padding-left: 20.5px; }
.tile svg { width: 84px; height: 84px; flex: none; border-radius: 50%; background: #fff; color: #a98b3d; }
.tile span { width: 126px; overflow-wrap: anywhere; }

/* White screens */
.light { background: #fff; }
.light::after { content: ""; position: absolute; inset: 0; border: 1.5px solid rgba(0, 0, 0, .12); border-radius: 13px; }
.appbar { height: 61px; background: #3a3b33; color: #fff; display: grid; grid-template-columns: 56px 1fr 56px; align-items: center; text-align: center; }
.appbar b { font-size: 23.5px; font-weight: 600; letter-spacing: .5px; }
.home { width: 34px; height: 34px; margin-left: 21.5px; margin-top: -1px; }
.voicebar { display: flex; padding: 0 0 1px 24px; }
.voicebar b { font-size: 26px; letter-spacing: .2px; margin-left: 18px; }
.reply { width: 31px; height: 24px; }
.barmic { width: 23px; height: 44px; margin-left: 100px; }
.filename { height: 47px; border-bottom: 2px solid #8a8a8a; text-align: center; font-size: 25px; line-height: 47px; letter-spacing: -.38px; color: #555; }
.timer { height: 54px; line-height: 50px; text-align: center; font-size: 23.5px; letter-spacing: -.8px; color: #555; padding-left: 12px; }
.bigmic { width: 313px; height: 313px; margin: 0 0 0 109px; border: 14.5px solid #a98b3d; border-radius: 50%; display: grid; place-items: center; color: #a98b3d; }
.bigmic svg { width: 93px; height: 180px; }
.meter { width: 317px; height: 87px; margin: 29px 0 0 107px; padding: 12px 10px; background: #a98b3d; border-radius: 9px; }
.meter span { display: block; height: 63px; background: repeating-linear-gradient(90deg, #b0a074 0 5px, #a98f4a 5px 6.5px, #b0a074 6.5px 10.8px); }
.actions { height: 205px; display: grid; grid-template-columns: 182px 174px; margin-left: 79px; }
.action { display: flex; flex-direction: column; align-items: center; color: #a98b3d; padding-top: 38px; }
.action b { color: #000; font-size: 22px; font-weight: 600; line-height: 28px; margin-top: auto; padding-bottom: 27px; letter-spacing: .3px; }
.smallmic { width: 46px; height: 88px; }
.play { width: 42px; height: 56px; margin: 17px 0 0 12px; }
.listrow { height: 61px; border-top: 2px solid #444; background: linear-gradient(#e2e2e2, #e2e2e2) 20px 100% / 100% 1.5px no-repeat; }

.group { height: 92.5px; padding: 45px 0 0 23px; background: #efeff4; border-top: 1px solid #dcdce0; border-bottom: 1px solid #dcdce0; font-size: 26px; font-weight: 400; line-height: 34px; letter-spacing: -.37px; color: #6d6d72; -webkit-text-stroke: .3px #6d6d72; }
.group.first { height: 63.5px; padding-top: 17px; }
.set { height: 79.4px; display: flex; align-items: center; gap: 10px; padding: 0 22px 1.5px 0; font-size: 23px; font-weight: 500; letter-spacing: -.13px; background: linear-gradient(#e3e3e6, #e3e3e6) 22px 100% / 100% 1.5px no-repeat; -webkit-text-stroke: .3px #000; }
.set svg { width: 65px; height: 65px; flex: none; color: #a98b3d; }
.set span { flex: 1; white-space: nowrap; }
.toggle { position: relative; width: 70px; height: 43px; border: 2px solid #e2e2e2; border-radius: 22px; background: radial-gradient(circle at 51px 50%, transparent 4.5px, #b0b0b0 5.200px 6.700px, transparent 7.400px); }
.toggle::before { content: ""; position: absolute; left: -1px; top: 0; width: 39px; height: 39px; border-radius: 50%; background: #fff; box-shadow: 0 3px 8px rgba(0, 0, 0, .3), 0 1px 2px rgba(0, 0, 0, .22); }
.chev { width: 12px; height: 12px; border: solid #c4c4c9; border-width: 2.5px 2.5px 0 0; transform: rotate(45deg) translate(-2px, 2px); }

.scrollbar { position: absolute; top: 0; right: 0; width: 37px; height: 100%; background: #f0f0f0; }
.scrollbar i { position: absolute; }
.thumb { left: 2px; top: 272px; width: 34px; height: 306px; background: #a8a8a8; }
.up { left: 9px; top: 15px; border: solid transparent; border-width: 0 9px 9px; border-bottom-color: #505050; }
.down { left: 11px; bottom: 12px; border: solid transparent; border-width: 9px 9px 0; border-top-color: #222; }

/* Taskbar */
.taskbar {
  position: absolute;
  z-index: 5;
  left: 0;
  right: 0;
  bottom: 0;
  height: 90px;
  display: flex;
  background: rgba(0, 0, 0, .85);
  font-family: "Open Sans", "Noto Sans", sans-serif;
  color: #fff;
}
.start { width: 267px; display: flex; align-items: center; padding: 0 0 0 38px; }
.start svg + svg { margin-left: 68px; }
.grip { width: 8px; height: 66px; margin-left: 41px; border: solid #555; border-width: 0 2px; }
.apps { display: flex; gap: 20px; }
.app { position: relative; width: 91px; height: 90px; display: grid; place-items: center; }
.app.run { border-bottom: 5px solid #76b9ed; padding-top: 5px; }
.app.current { width: 109px; margin: 0 -9px 0 -9px; background: #505050; }
.app.current::after { content: ""; position: absolute; right: 0; top: 0; width: 9px; height: 90px; background: rgba(0, 0, 0, .2); border-left: 2px solid #333; }
.app.multi::after { content: ""; position: absolute; right: -20px; bottom: -5px; width: 20px; height: 5px; background: #5288b5; }
.app i { position: absolute; font-weight: 700; font-size: 30px; }
.app .s { color: #2b303b; font-size: 26px; }
.app .sk { left: 30px; top: 17px; font-size: 38px; line-height: 50px; }
.app .status { left: 46px; top: 45px; width: 26px; height: 26px; border: 2.5px solid #7fba00; border-radius: 50%; background: #fff; }
.count { position: absolute; left: 38px; top: 43px; width: 63px; height: 38px; border: 2px solid #aaa; border-radius: 19px; background: rgba(60, 60, 60, .75); font-size: 25px; line-height: 34px; text-align: center; letter-spacing: 0; padding-right: 4px; }
.tray { margin-left: auto; display: flex; align-items: center; flex: none; }
.t-help { width: 53px; height: 49px; margin: 7px 0 0; }
.t-people { width: 32px; height: 34px; margin-left: 51px; }
.t-up { width: 26px; height: 14px; margin-left: 61px; }
.t-wifi { width: 28px; height: 28px; margin: 4px 0 0 48px; }
.t-vol { width: 36px; height: 28px; margin-left: 38px; }
.t-pen { width: 40px; height: 38px; margin-left: 43px; }
.clock { width: 134px; margin-left: 36px; display: flex; flex-direction: column; align-items: center; font-size: 27px; line-height: 42px; letter-spacing: -.8px; margin-top: -2px; padding-bottom: 2px; }
.clock span + span { letter-spacing: -.3px; }
.t-note { width: 38px; height: 38px; margin: 2px 0 0 39px; }
.peek { width: 7px; margin-left: 47px; height: 100%; border-left: 1.5px solid #777; }
```
